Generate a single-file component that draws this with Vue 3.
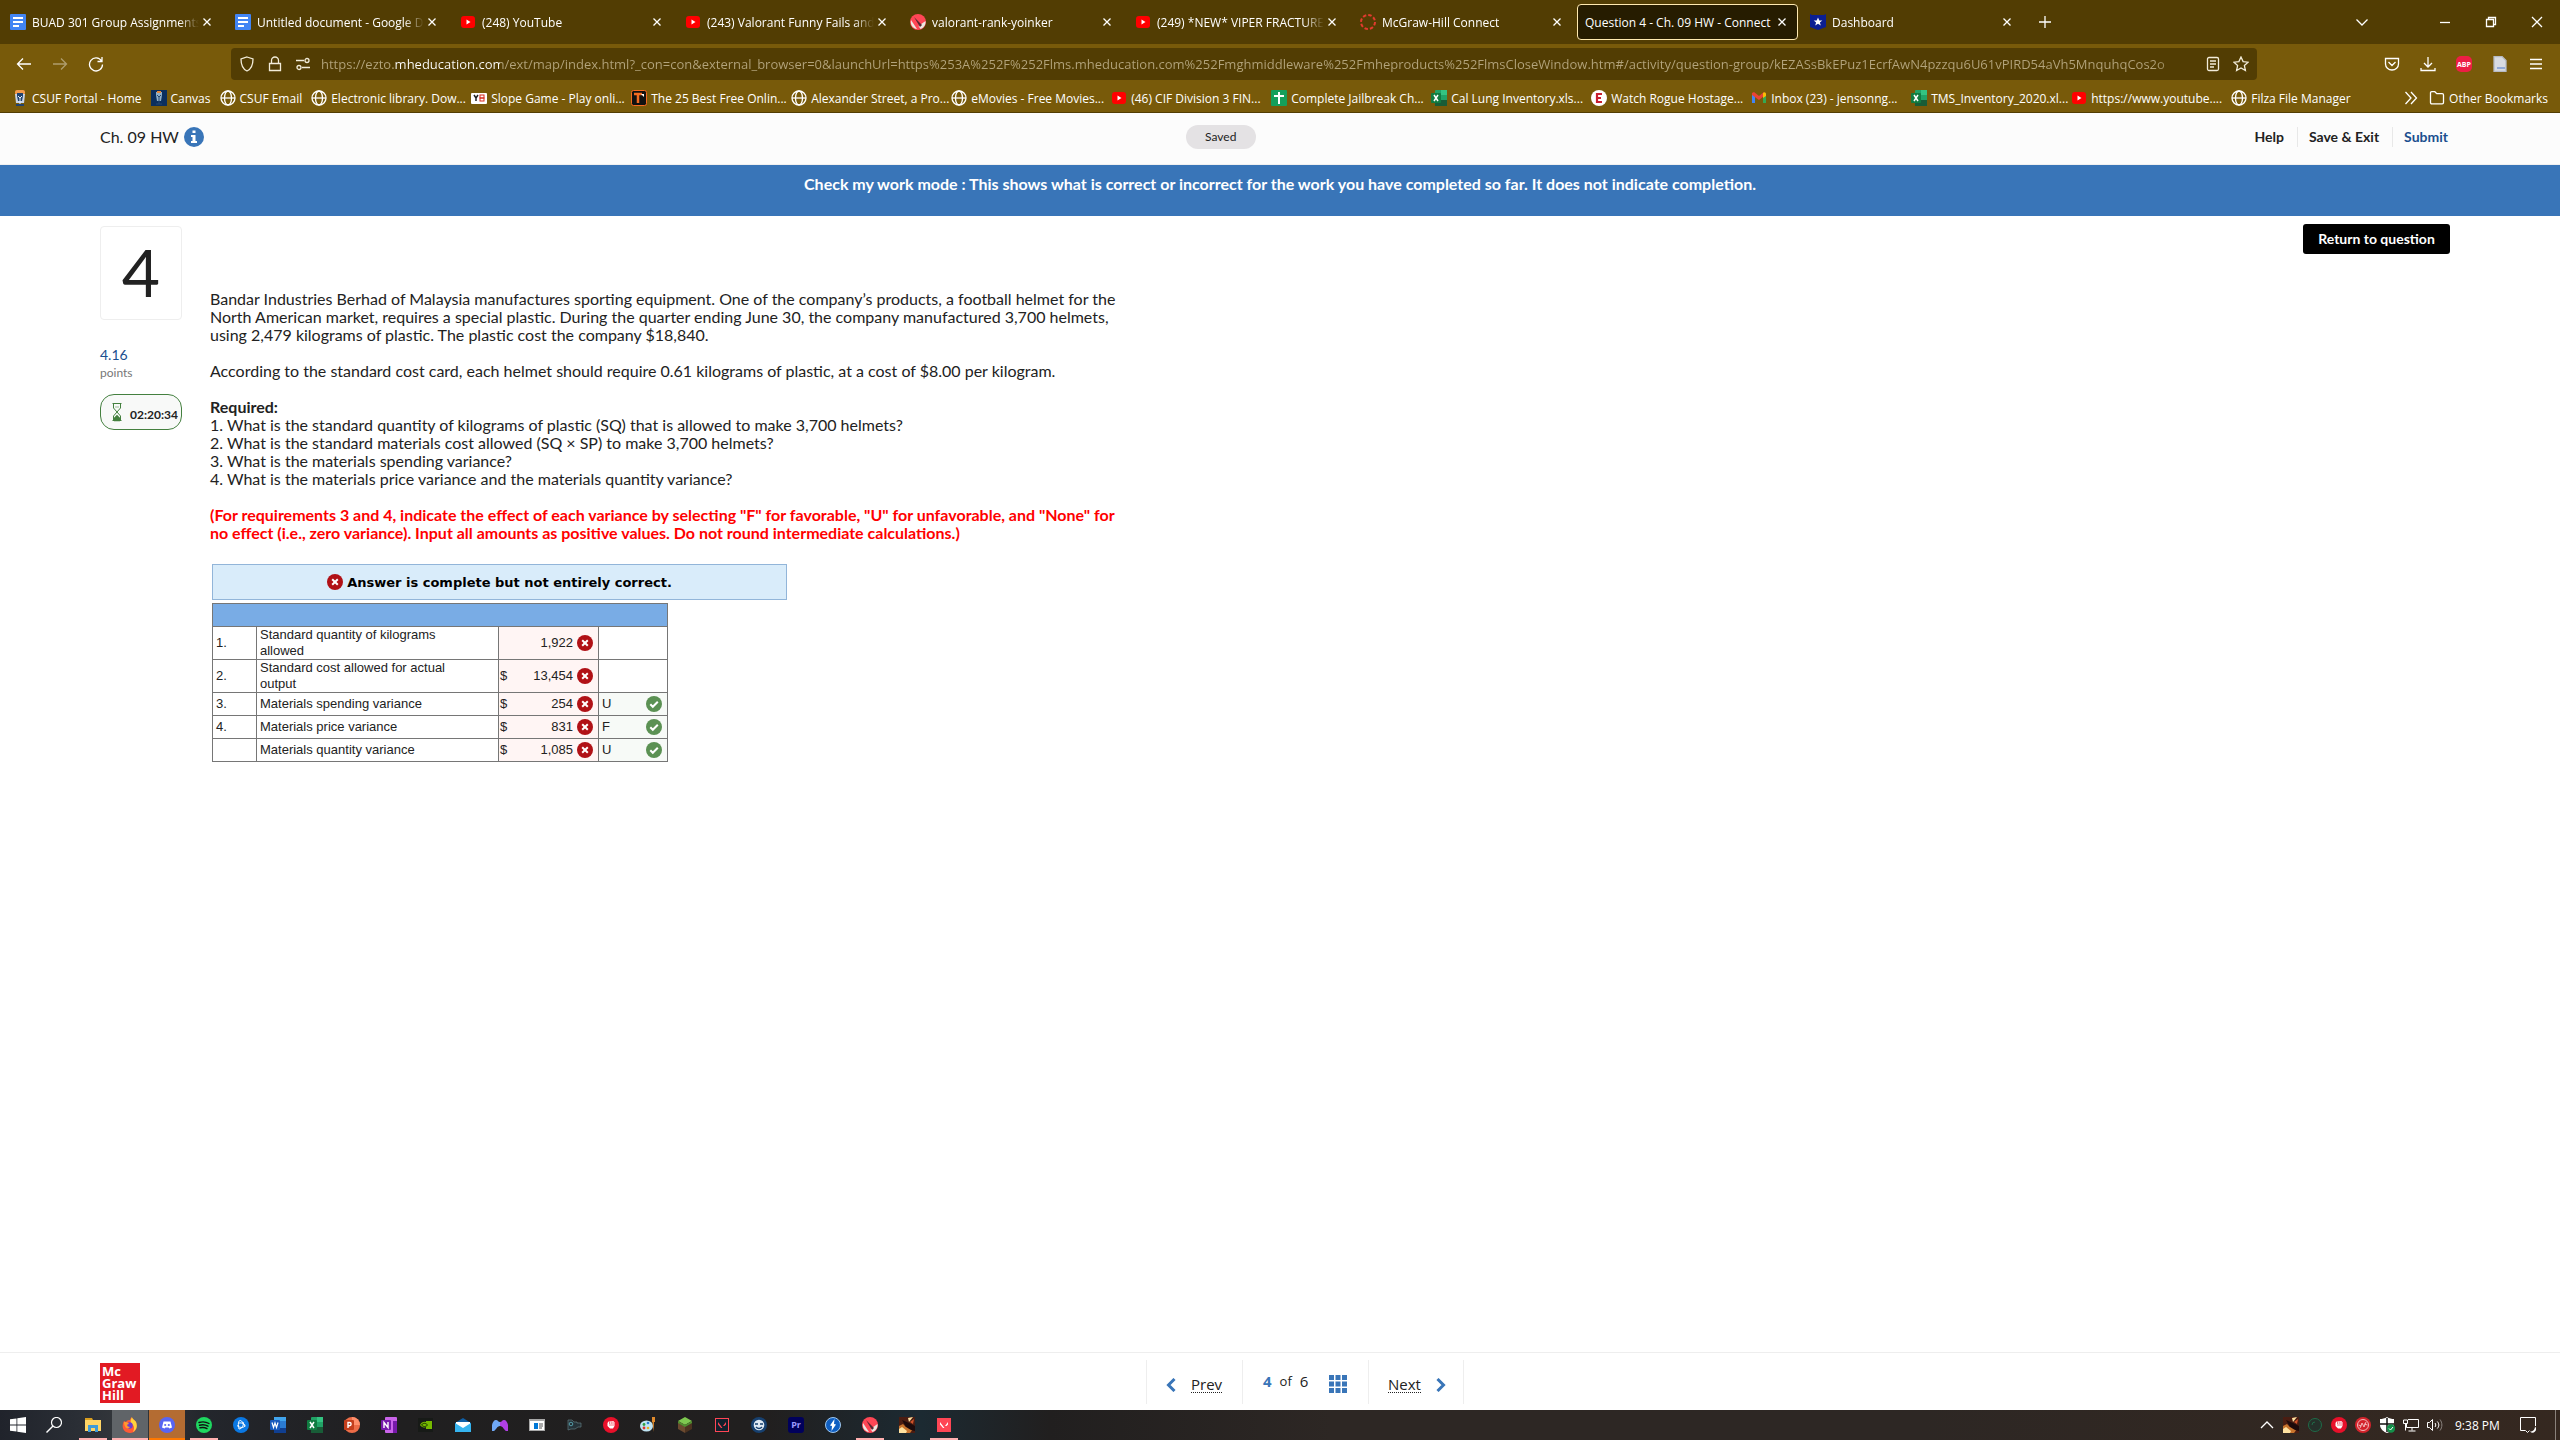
<script setup>
import {ref} from "vue";

const url = ref("https://ezto.mheducation.com/ext/map/index.html?_con=con&external_browser=0&launchUrl=https%253A%252F%252Flms.mheducation.com%252Fmghmiddleware%252Fmheproducts%252FlmsCloseWindow.htm#/activity/question-group/kEZASsBkEPuz1EcrfAwN4pzzqu6U61vPIRD54aVh5MnquhqCos2o")

const tabs = ref([
  {title: "BUAD 301 Group Assignments -", icon: "docs"},
  {title: "Untitled document - Google Do", icon: "docs"},
  {title: "(248) YouTube", icon: "youtube"},
  {title: "(243) Valorant Funny Fails and W", icon: "youtube"},
  {title: "valorant-rank-yoinker", icon: "yoinker"},
  {title: "(249) *NEW* VIPER FRACTURE M", icon: "youtube"},
  {title: "McGraw-Hill Connect", icon: "canvas-ring"},
  {title: "Question 4 - Ch. 09 HW - Connect", active: true},
  {title: "Dashboard", icon: "badge"},
])

const bookmarks = ref([
  {title: "CSUF Portal - Home", icon: "csuf"},
  {title: "Canvas", icon: "csuf-blue"},
  {title: "CSUF Email", icon: "globe"},
  {title: "Electronic library. Dow...", icon: "globe", cropped: true},
  {title: "Slope Game - Play onli...", icon: "y8", cropped: true},
  {title: "The 25 Best Free Onlin...", icon: "tnw", cropped: true},
  {title: "Alexander Street, a Pro...", icon: "globe", cropped: true},
  {title: "eMovies - Free Movies...", icon: "globe", cropped: true},
  {title: "(46) CIF Division 3 FIN...", icon: "youtube", cropped: true},
  {title: "Complete Jailbreak Ch...", icon: "sheets", cropped: true},
  {title: "Cal Lung Inventory.xls...", icon: "excel", cropped: true},
  {title: "Watch Rogue Hostage...", icon: "letter-e", cropped: true},
  {title: "Inbox (23) - jensonng...", icon: "gmail", cropped: true},
  {title: "TMS_Inventory_2020.xl...", icon: "excel", cropped: true},
  {title: "https://www.youtube....", icon: "youtube", cropped: true},
  {title: "Filza File Manager", icon: "globe"},
])

const answers = ref([
  {no: "1.", label: "Standard quantity of kilograms allowed", value: "1,922"},
  {no: "2.", label: "Standard cost allowed for actual output", sign: "$", value: "13,454"},
  {no: "3.", label: "Materials spending variance", sign: "$", value: "254", effect: "U"},
  {no: "4.", label: "Materials price variance", sign: "$", value: "831", effect: "F"},
  {no: "", label: "Materials quantity variance", sign: "$", value: "1,085", effect: "U"},
])

const apps = ref([
  {icon: "explorer", name: "File Explorer", state: "open"},
  {icon: "firefox", name: "Firefox", state: "current"},
  {icon: "discord", name: "Discord", state: "alert"},
  {icon: "spotify", name: "Spotify", state: "open"},
  {icon: "bnet", name: "Battle.net"},
  {icon: "word", name: "Word"},
  {icon: "excel", name: "Excel"},
  {icon: "ppt", name: "PowerPoint"},
  {icon: "onenote", name: "OneNote"},
  {icon: "nvidia", name: "NVIDIA"},
  {icon: "mail", name: "Mail"},
  {icon: "gamepad", name: "Controller"},
  {icon: "window", name: "App"},
  {icon: "engine", name: "Engine"},
  {icon: "fist", name: "Bloody"},
  {icon: "paint", name: "Paint"},
  {icon: "minecraft", name: "Minecraft"},
  {icon: "valorant-dark", name: "Valorant"},
  {icon: "mask", name: "Mask"},
  {icon: "premiere", name: "Premiere Pro"},
  {icon: "bolt", name: "Bolt"},
  {icon: "yoinker", name: "Yoinker", state: "open"},
  {icon: "flame", name: "Game"},
  {icon: "valorant", name: "Valorant client", state: "open"},
])

const tray = ref(["up", "flame", "ring", "fist", "swirl", "defender", "network", "volume"])
</script>

<template>
  <div class="screen">
    <!-- icon sprite -->
    <svg class="sprite" aria-hidden="true">
      <symbol id="docs" viewBox="0 0 16 16"><rect width="16" height="16" rx="1" fill="#4285f4"/><path d="M3 4h10M3 8h10M3 12h6" stroke="#fff" stroke-width="2"/></symbol>
      <symbol id="youtube" viewBox="0 0 16 16"><rect x="1" y="2" width="14" height="12" rx="3" fill="#f00"/><path d="M6.500 5.500v5L10.500 8z" fill="#fff"/></symbol>
      <symbol id="yoinker" viewBox="0 0 16 16"><circle cx="8" cy="8" r="8" fill="#ff4655"/><path d="M1 6l6 9C3 14.500 0 11 1 6zM15.500 7c.5 4-2 7-5 8l-2-3z" fill="#ece8e1"/><path d="M4 3l8 8-2 2z" fill="#5b2530"/></symbol>
      <symbol id="canvas-ring" viewBox="0 0 16 16"><circle cx="8" cy="8" r="7" fill="none" stroke="#e13b2f" stroke-width="2" stroke-dasharray="3.500 2"/></symbol>
      <symbol id="badge" viewBox="0 0 16 16"><path d="M0 0l2 1h12l2-1v13l-8 3-8-3z" fill="#0b1f93"/><path d="M8 3.500l1.300 3h3l-2.400 2 .9 3L8 9.700l-2.800 1.800.9-3-2.400-2h3z" fill="#fff"/></symbol>
      <symbol id="csuf" viewBox="0 0 16 16"><rect x="3" width="10" height="5" rx="2" fill="#f29b4c"/><path d="M3 4h10l-1 9h-8z" fill="#c9d4e6"/><path d="M5 3h6v3l-1 5H6L5 6zM4 14h8v2H4z" fill="#20426f"/><path d="M6 6l2 2 2-2M8 8v6" stroke="#e9eef6" fill="none"/></symbol>
      <symbol id="csuf-blue" viewBox="0 0 16 16"><rect width="16" height="16" fill="#0b2f5e"/><path d="M5 2h6v3l-1 6H6L5 5z" fill="#8fb0c9"/><path d="M6 5l2 2 2-2M8 7v7M5 14h6" stroke="#24466f" fill="none"/><rect x="6" y="1" width="4" height="2" fill="#e8893a"/></symbol>
      <symbol id="globe" viewBox="0 0 16 16"><g fill="none" stroke="#fff" stroke-width="1.300"><circle cx="8" cy="8" r="7"/><ellipse cx="8" cy="8" rx="3.500" ry="7"/><path d="M1 8h14"/></g></symbol>
      <symbol id="y8" viewBox="0 0 16 16"><rect y="3" width="16" height="11" rx="1" fill="#fff"/><path d="M3 5l2 3 2-3M5 8v3" stroke="#222" stroke-width="1.500" fill="none"/><rect x="9" y="5" width="4" height="3" fill="none" stroke="#d8291c"/><rect x="9" y="8" width="4" height="3" fill="none" stroke="#d8291c"/></symbol>
      <symbol id="tnw" viewBox="0 0 16 16"><rect x=".5" y=".5" width="15" height="15" rx="2" fill="#111" stroke="#f36b21"/><path d="M3 4h8M7 4v9" stroke="#f36b21" stroke-width="2.500"/><path d="M10 4h3v3" fill="#fff"/></symbol>
      <symbol id="sheets" viewBox="0 0 16 16"><rect width="16" height="16" rx="1" fill="#159f5b"/><path d="M3 6h10M8 2v12" stroke="#fff" stroke-width="2"/></symbol>
      <symbol id="excel" viewBox="0 0 16 16"><rect x="4" width="12" height="16" rx="1" fill="#21a366"/><rect x="10" width="6" height="5" fill="#33c481"/><rect x="4" y="10" width="12" height="6" fill="#185c37"/><rect y="3" width="10" height="10" rx="1" fill="#107c41"/><path d="M3 5l4 6M7 5l-4 6" stroke="#fff" stroke-width="1.500"/></symbol>
      <symbol id="letter-e" viewBox="0 0 16 16"><circle cx="8" cy="8" r="8" fill="#fff"/><path d="M11 4H6v8h5M6 8h4" stroke="#c8202f" stroke-width="2.200" fill="none"/></symbol>
      <symbol id="gmail" viewBox="0 0 16 16"><path d="M1 4h3v9H1z" fill="#4285f4"/><path d="M12 4h3v9h-3z" fill="#34a853"/><path d="M1 3l2-1 5 4 5-4v4l-5 4-7-5z" fill="#ea4335"/><path d="M12 3c2-2 3 0 3 1v2l-3 2z" fill="#fbbc04"/></symbol>
      <symbol id="folder" viewBox="0 0 16 16"><path d="M1.500 3c0-.8.500-1.300 1.300-1.300h3l2 2h5.400c.8 0 1.300.5 1.300 1.300v7.500c0 .8-.5 1.300-1.300 1.300H2.800c-.8 0-1.300-.5-1.300-1.300z" fill="none" stroke="#fff" stroke-width="1.300"/></symbol>
      <symbol id="cross" viewBox="0 0 16 16"><circle cx="8" cy="8" r="8" fill="#b11116"/><path d="M5.200 5.200l5.600 5.600M10.800 5.200l-5.600 5.600" stroke="#fff" stroke-width="2"/></symbol>
      <symbol id="tick" viewBox="0 0 16 16"><circle cx="8" cy="8" r="8" fill="#5b9153"/><path d="M4.300 8.300l2.500 2.500 5-5" fill="none" stroke="#fff" stroke-width="2"/></symbol>
      <symbol id="explorer" viewBox="0 0 16 16"><path d="M0 1h7l1 2v3H0z" fill="#d99e1f"/><rect y="3" width="16" height="11" fill="#ffd566"/><path d="M3 15V8h10v7h-3v-4H6v4z" fill="#3f9bd8"/></symbol>
      <symbol id="firefox" viewBox="0 0 16 16"><path d="M2 4l2 1c1-2 3-2 4-2 0-1 1-2 2-3 0 2 3 3 4 5s2 11-6 11C1 16-1 9 2 4z" fill="#ff5a36"/><path d="M10 0c0 2 3 3 4 5 2 5 0 8-3 10 2-4 1-7-2-9-1-2 0-4 1-6z" fill="#ffd43c"/><circle cx="7.500" cy="8.500" r="3.200" fill="#6a3fd1"/><path d="M2 5c2 0 4 0 5 2-3 0-2 3 1 3-2 3-6 1-6-5z" fill="#ff9a2e"/></symbol>
      <symbol id="discord" viewBox="0 0 16 16"><circle cx="8" cy="8" r="8" fill="#5865f2"/><path d="M4.500 4.500h7l1.500 6-2.500 1-1-1h-3l-1 1-2.500-1z" fill="#fff"/><circle cx="6.200" cy="8" r="1.100" fill="#5865f2"/><circle cx="9.800" cy="8" r="1.100" fill="#5865f2"/></symbol>
      <symbol id="spotify" viewBox="0 0 16 16"><circle cx="8" cy="8" r="8" fill="#1ed760"/><path d="M3 5.500c3.500-1 7-.7 10 1M3.500 8.200c3-.8 6-.5 8.500 1M4 10.800c2.500-.6 5-.4 7 .8" fill="none" stroke="#111" stroke-width="1.400" stroke-linecap="round"/></symbol>
      <symbol id="bnet" viewBox="0 0 16 16"><circle cx="8" cy="8" r="8" fill="#0a78e3"/><g fill="none" stroke="#fff"><path d="M6 12C5 8 5 4 7 3.500S11 8 12 10"/><path d="M4 8.500c3 3 8 2 8 0S7 5 5 6.500M6 12c3 0 5-4 4-7"/></g></symbol>
      <symbol id="word" viewBox="0 0 16 16"><rect x="4" width="12" height="16" rx="1" fill="#2b7cd3"/><rect x="4" width="12" height="4" fill="#41a5ee"/><rect x="4" y="11" width="12" height="5" fill="#103f91"/><rect y="3" width="10" height="10" rx="1" fill="#185abd"/><path d="M2 5.500l1.500 5L5 6l1.500 4.500 1.500-5" fill="none" stroke="#fff" stroke-width="1.200"/></symbol>
      <symbol id="ppt" viewBox="0 0 16 16"><circle cx="8" cy="8" r="8" fill="#ed6c47"/><path d="M8 0a8 8 0 0 1 8 8H8z" fill="#ff8f6b"/><rect y="3" width="10" height="10" rx="1" fill="#c43e1c"/><path d="M4 11V5.500h1.500a1.600 1.600 0 0 1 0 3.200H4" fill="none" stroke="#fff" stroke-width="1.400"/></symbol>
      <symbol id="onenote" viewBox="0 0 16 16"><rect x="4" width="12" height="16" rx="1" fill="#ca64ea"/><rect x="12" y="4" width="4" height="12" fill="#7719aa"/><rect y="3" width="10" height="10" rx="1" fill="#7719aa"/><path d="M3 11V5.500L7 10.500V5" fill="none" stroke="#fff" stroke-width="1.400"/></symbol>
      <symbol id="nvidia" viewBox="0 0 16 16"><rect y="1" width="15" height="14" fill="#171a17"/><path d="M2 8c2-4 6-4 9-1-3 5-7 4-9 1zM8 4h6v8H8z" fill="#76b900"/><path d="M3.500 8c2-2.500 4-2 6 0-2 2-4 2-6 0z" fill="none" stroke="#1c3300"/></symbol>
      <symbol id="mail" viewBox="0 0 16 16"><path d="M0 6l8-5 8 5v4H0z" fill="#0f5fa6"/><path d="M1 5h14v6H1z" fill="#fff"/><path d="M0 6l8 5 8-5v9H0z" fill="#36b4ef"/></symbol>
      <symbol id="gamepad" viewBox="0 0 16 16"><path d="M0 14c-1-6 1-11 4-11 2 0 2 2 4 2v4c-3 0-4 4-6 5z" fill="#6fa8f5"/><path d="M16 14c1-6-1-11-4-11-2 0-2 2-4 2v4c3 0 4 4 6 5z" fill="#b13fe6"/></symbol>
      <symbol id="window" viewBox="0 0 16 16"><rect y="2" width="16" height="12" fill="#a8a8a8"/><rect x="1" y="4" width="14" height="9" fill="#fff"/><rect x="5" y="6" width="4" height="6" fill="#0078d7"/><path d="M10 7h4M10 9h4M10 11h3" stroke="#555"/></symbol>
      <symbol id="engine" viewBox="0 0 16 16"><path d="M2 3h4l2 2h3v1h4v4h-3l-3 2H5l-3 1z" fill="#263238" stroke="#5f7a80" stroke-width=".7"/><circle cx="5" cy="7" r="1.800" fill="none" stroke="#5fb4c0" stroke-width=".8"/></symbol>
      <symbol id="fist" viewBox="0 0 16 16"><circle cx="8" cy="8" r="8" fill="#e8102a"/><path d="M4.500 6l1-1.500 5-.5 1 1.500V9l-1.500 2.500H7L4.500 9z" fill="#fff"/><path d="M6.500 4.500v2.500M8.200 4.500v2.500M10 4.500v2.500M6 8h5" stroke="#e8102a" stroke-width=".6"/></symbol>
      <symbol id="paint" viewBox="0 0 16 16"><ellipse cx="6.500" cy="9" rx="6.500" ry="5.500" fill="#bfe4f3"/><circle cx="4" cy="7.500" r="1.400" fill="#2f9e44"/><circle cx="8" cy="6" r="1.300" fill="#2b7cd3"/><circle cx="4" cy="11" r="1.400" fill="#e03131"/><circle cx="8" cy="11" r="1.300" fill="#e8b022"/><path d="M12 0h3v5h-1l-.5 10-1-10H12z" fill="#e08a2c"/></symbol>
      <symbol id="minecraft" viewBox="0 0 16 16"><path d="M1 4l7-4 7 4-7 4z" fill="#7ec850"/><path d="M1 4l7 4v8l-7-4z" fill="#6b4a2f"/><path d="M15 4L8 8v8l7-4z" fill="#4c3320"/><path d="M1 4l7 4 7-4v2l-7 4-7-4z" fill="#4f8f30"/></symbol>
      <symbol id="valorant-dark" viewBox="0 0 16 16"><rect x="1.500" y="1.500" width="13" height="13" fill="#10202c" stroke="#ff4655"/><path d="M4 5l4.500 6H7L4 7.500zM12 5v2.500L10.500 9H9z" fill="#ff4655"/></symbol>
      <symbol id="mask" viewBox="0 0 16 16"><circle cx="8" cy="8" r="8" fill="#17406f"/><circle cx="8" cy="8" r="5.300" fill="#dfe9f3"/><path d="M4 7h3M9 7h3M5 10c2 2 4 2 6 0" stroke="#17406f" stroke-width="1.400" fill="none"/></symbol>
      <symbol id="premiere" viewBox="0 0 16 16"><rect width="16" height="16" rx="3" fill="#00005b"/><text x="8" y="11" font-family="Open Sans, sans-serif" font-size="9" font-weight="700" text-anchor="middle" fill="#9b9bff">Pr</text></symbol>
      <symbol id="bolt" viewBox="0 0 16 16"><circle cx="8" cy="8" r="7.500" fill="#0f5fc2" stroke="#9ec7ee"/><path d="M9.500 2L5 8.500l2 .5-.5 5L11 7.500 9 7z" fill="#fff"/></symbol>
      <symbol id="flame" viewBox="0 0 16 16"><rect width="16" height="16" fill="#4a1d12"/><path d="M0 16V9l4-2 3 3 3-1 4 3-3 4z" fill="#c8742d"/><path d="M0 16v-4l3-2 5 4-1 2zM9 1l5-1-4 5z" fill="#ffe2a0"/><path d="M3 3l7 3 6 3v5l-4-1-5-3z" fill="#1c0a0b"/><path d="M11 5l4-3-1 5z" fill="#d0532a"/></symbol>
      <symbol id="valorant" viewBox="0 0 16 16"><rect x="1" y="1" width="14" height="14" fill="#ff4655"/><path d="M4 5l4.500 6H7L4 7.500zM12 5v2.500L10.500 9H9z" fill="#fff"/></symbol>
      <symbol id="up" viewBox="0 0 16 16"><path d="M2 11l6-6 6 6" fill="none" stroke="#fff" stroke-width="1.300"/></symbol>
      <symbol id="ring" viewBox="0 0 16 16"><circle cx="8" cy="8" r="6.500" fill="#24302a" stroke="#1f6b48"/><path d="M5 8a3 3 0 0 1 3-3" stroke="#1f6b48" fill="none"/></symbol>
      <symbol id="swirl" viewBox="0 0 16 16"><circle cx="8" cy="8" r="8" fill="#d3232b"/><g fill="none" stroke="#f3b9bb"><circle cx="8" cy="8" r="5.500"/><path d="M5 11l2-5 2 4 2-5M3.500 8l3 1M9 7l3.500 1"/></g></symbol>
      <symbol id="defender" viewBox="0 0 16 16"><path d="M8 0c2 1.500 5 2 7 2v6c0 4-4 7-7 8-3-1-7-4-7-8V2c2 0 5-.5 7-2z" fill="#fff"/><path d="M8 1v14M1 7h14" stroke="#111" stroke-width="1.500"/><circle cx="12" cy="11.500" r="4.200" fill="#14904a"/><path d="M10 11.500l1.500 1.500 2.500-3" stroke="#fff" fill="none"/></symbol>
      <symbol id="network" viewBox="0 0 16 16"><path d="M5 2.500h10.500v8H3.500V7M9 10.500v3M5.500 14h7M.5 3h4v3.500h-4zM2.500 6.500v7" fill="none" stroke="#fff"/></symbol>
      <symbol id="volume" viewBox="0 0 16 16"><path d="M.5 5.500h2l3-3v11l-3-3h-2z" fill="none" stroke="#fff"/><path d="M8 6c1 1.300 1 2.700 0 4M10.300 4.500c2 2.300 2 4.700 0 7" fill="none" stroke="#fff"/><path d="M13 2.500c2.500 3.300 2.500 7.700 0 11" fill="none" stroke="#8c8580"/></symbol>
    </svg>

    <!-- browser chrome -->
    <header class="browser">
      <div class="tab-strip">
        <div v-for="tab in tabs" class="tab" :class="{active: tab.active}">
          <svg v-if="tab.icon" class="icon"><use :href="'#' + tab.icon"/></svg>
          <button class="tab-title">{{tab.title}}</button>
          <button class="tab-close" aria-label="Close tab">
            <svg viewBox="0 0 16 16"><path d="M4.500 4.500l7 7M11.500 4.500l-7 7"/></svg>
          </button>
        </div>
        <button class="new-tab" aria-label="New tab">
          <svg viewBox="0 0 16 16"><path d="M8 2v12M2 8h12"/></svg>
        </button>
        <div class="window-buttons">
          <button class="all-tabs" aria-label="List all tabs"><svg viewBox="0 0 16 16"><path d="M2.500 5.500L8 11l5.500-5.500"/></svg></button>
          <button aria-label="Minimize"><svg viewBox="0 0 16 16"><path d="M3 8.500h10"/></svg></button>
          <button aria-label="Restore"><svg viewBox="0 0 16 16"><path d="M3.500 5.500h7v7h-7zM5.500 5.500v-2h7v7h-2"/></svg></button>
          <button aria-label="Close"><svg viewBox="0 0 16 16"><path d="M3 3l10 10M13 3L3 13"/></svg></button>
        </div>
      </div>

      <div class="nav-bar">
        <div class="nav-buttons">
          <button aria-label="Back"><svg viewBox="0 0 16 16"><path d="M15 8H1.500M7 2.500L1.500 8 7 13.500"/></svg></button>
          <button class="dim" aria-label="Forward"><svg viewBox="0 0 16 16"><path d="M1 8h13.500M9 2.500L14.500 8 9 13.500"/></svg></button>
          <button aria-label="Reload"><svg viewBox="0 0 16 16"><path d="M13.500 5A6.500 6.500 0 1 0 14.500 8.500M14 1v4.500H9.500"/></svg></button>
        </div>
        <div class="url-bar">
          <svg viewBox="0 0 16 16"><path d="M8 1l6 2c0 6-1.500 10-6 12C3.500 13 2 9 2 3z"/></svg>
          <svg viewBox="0 0 16 16"><path d="M2.500 7.500h11v7h-11zM4.500 7.500V4.500a3.500 3.500 0 0 1 7 0v3"/></svg>
          <svg viewBox="0 0 16 16"><path d="M1 4.500h8M7 11.500h8"/><circle cx="12" cy="4.500" r="2"/><circle cx="4" cy="11.500" r="2"/></svg>
          <input v-model="url" class="url-input" type="text" aria-label="Address" spellcheck="false">
          <svg viewBox="0 0 16 16"><rect x="2.500" y="1.500" width="11" height="13" rx="1.500"/><path d="M5 5h6M5 8h6M5 11h4"/></svg>
          <svg viewBox="0 0 16 16"><path d="M8 1l2.100 4.600 5 .6-3.700 3.400 1 4.900L8 12l-4.400 2.500 1-4.900L.9 6.200l5-.6z"/></svg>
        </div>
        <div class="toolbar">
          <button aria-label="Pocket"><svg viewBox="0 0 16 16"><path d="M1.500 2.500h13V8a6.500 6 0 0 1-13 0zM4.500 6L8 9.500 11.500 6"/></svg></button>
          <button aria-label="Downloads"><svg viewBox="0 0 16 16"><path d="M8 1v9.500M4 7l4 4 4-4M1 12v2.500h14V12"/></svg></button>
          <button class="abp" aria-label="Adblock Plus">ABP</button>
          <button aria-label="Reader"><svg viewBox="0 0 16 16"><path d="M2 .5h8l4 4v11H2z" fill="#d8dbe2" stroke="#b6bac4"/><path d="M5 12h8" stroke="#6d8fd0"/></svg></button>
          <button aria-label="Menu"><svg viewBox="0 0 16 16"><path d="M2 3.500h12M2 8h12M2 12.500h12"/></svg></button>
        </div>
      </div>

      <nav class="bookmarks">
        <a v-for="mark in bookmarks" href="#" class="bookmark">
          <svg class="icon"><use :href="'#' + mark.icon"/></svg>
          <span :class="{cropped: mark.cropped}">{{mark.title}}</span>
        </a>
        <div class="bookmarks-more">
          <button aria-label="More bookmarks"><svg viewBox="0 0 16 16"><path d="M2.500 2l5.500 6-5.500 6M8 2l5.500 6L8 14"/></svg></button>
          <a href="#" class="bookmark">
            <svg class="icon"><use href="#folder"/></svg>
            <span>Other Bookmarks</span>
          </a>
        </div>
      </nav>
    </header>

    <!-- assignment header -->
    <div class="assignment-bar">
      <div class="assignment-title">
        <span>Ch. 09 HW</span>
        <svg viewBox="0 0 20 20"><circle cx="10" cy="10" r="10" fill="#3975b8"/><path d="M8.500 3.500h3v2.500h-3zM7 8h4.500v6H13v2H7v-2h1.500v-4H7z" fill="#fff"/></svg>
      </div>
      <span class="saved">Saved</span>
      <div class="assignment-actions">
        <a href="#">Help</a>
        <a href="#">Save &amp; Exit</a>
        <a href="#" class="submit">Submit</a>
      </div>
    </div>
    <div class="banner">Check my work mode : This shows what is correct or incorrect for the work you have completed so far. It does not indicate completion.</div>

    <main class="main">
      <aside class="side">
        <div class="number">4</div>
        <div class="score">4.16</div>
        <div class="points">points</div>
        <div class="timer">
          <svg viewBox="0 0 10 20"><path d="M.5 1.500h9M.5 18.500h9M1.500 2v4L5 10l3.500-4V2M1.500 18v-4L5 10l3.500 4v4" fill="none" stroke="#44803f"/><path d="M5 13l3 3v3H2v-3zM3 5h4" fill="#44803f" stroke="#44803f" stroke-width=".5"/></svg>
          <span>02:20:34</span>
        </div>
      </aside>

      <section class="question">
        <p>
          Bandar Industries Berhad of Malaysia manufactures sporting equipment. One of the company’s products, a football helmet for the<br>
          North American market, requires a special plastic. During the quarter ending June 30, the company manufactured 3,700 helmets,<br>
          using 2,479 kilograms of plastic. The plastic cost the company $18,840.
        </p>
        <p>According to the standard cost card, each helmet should require 0.61 kilograms of plastic, at a cost of $8.00 per kilogram.</p>
        <p>
          <b>Required:</b><br>
          1. What is the standard quantity of kilograms of plastic (SQ) that is allowed to make 3,700 helmets?<br>
          2. What is the standard materials cost allowed (SQ × SP) to make 3,700 helmets?<br>
          3. What is the materials spending variance?<br>
          4. What is the materials price variance and the materials quantity variance?
        </p>
        <p class="note">
          (For requirements 3 and 4, indicate the effect of each variance by selecting "F" for favorable, "U" for unfavorable, and "None" for<br>
          no effect (i.e., zero variance). Input all amounts as positive values. Do not round intermediate calculations.)
        </p>

        <div class="result">
          <svg class="icon"><use href="#cross"/></svg>
          <span>Answer is complete but not entirely correct.</span>
        </div>

        <table class="answers">
          <colgroup>
            <col class="col-no"><col class="col-label"><col class="col-value"><col class="col-effect">
          </colgroup>
          <thead>
            <tr><th colspan="4"></th></tr>
          </thead>
          <tbody>
            <tr v-for="row in answers">
              <td>{{row.no}}</td>
              <td>{{row.label}}</td>
              <td class="value">
                <div class="amount">
                  <span v-if="row.sign" class="sign">{{row.sign}}</span>
                  <span class="figure">{{row.value}}<svg class="icon"><use href="#cross"/></svg></span>
                </div>
              </td>
              <td :class="{effect: row.effect}">
                <div v-if="row.effect" class="pick">{{row.effect}}<svg class="icon"><use href="#tick"/></svg></div>
              </td>
            </tr>
          </tbody>
        </table>
      </section>

      <button class="return">Return to question</button>
    </main>

    <footer class="pager">
      <div class="logo"><span>Mc</span><span>Graw</span><span>Hill</span></div>
      <nav class="pages">
        <a href="#" class="page-cell prev">
          <svg viewBox="0 0 10 14"><path d="M8.500 1l-6 6 6 6"/></svg>
          <span>Prev</span>
        </a>
        <div class="page-cell count">
          <b>4</b><span class="of">of</span><span>6</span>
          <button aria-label="All questions">
            <svg viewBox="0 0 18 18"><path d="M0 0h5v5H0zM6.500 0h5v5h-5zM13 0h5v5h-5zM0 6.500h5v5H0zM6.500 6.500h5v5h-5zM13 6.500h5v5h-5zM0 13h5v5H0zM6.500 13h5v5h-5zM13 13h5v5h-5z"/></svg>
          </button>
        </div>
        <a href="#" class="page-cell next">
          <span>Next</span>
          <svg viewBox="0 0 10 14"><path d="M1.500 1l6 6-6 6"/></svg>
        </a>
      </nav>
    </footer>

    <!-- windows taskbar -->
    <div class="taskbar">
      <button class="start" aria-label="Start"><svg viewBox="0 0 16 16"><path d="M0 2.300L6.500 1.400v6.100H0zM7.300 1.300L16 0v7.500H7.300zM0 8.400h6.500v6.200L0 13.700zM7.300 8.400H16V16l-8.700-1.300z" fill="#fff"/></svg></button>
      <button class="start" aria-label="Search"><svg viewBox="0 0 16 16"><circle cx="10.500" cy="5.500" r="5" fill="none" stroke="#fff" stroke-width="1.200"/><path d="M7 9L.5 15.500" stroke="#fff" stroke-width="1.400"/></svg></button>
      <div class="apps">
        <button v-for="app in apps" class="app" :class="app.state" :aria-label="app.name">
          <svg class="icon"><use :href="'#' + app.icon"/></svg>
        </button>
      </div>
      <div class="tray">
        <svg v-for="name in tray" class="icon"><use :href="'#' + name"/></svg>
      </div>
      <time class="clock">9:38 PM</time>
      <button class="notices" aria-label="Notifications"><svg viewBox="0 0 16 16"><path d="M9.500 13.500l-2 2-2-2h-5V.5h15V9" fill="none" stroke="#fff"/><path d="M15 9.500a3.500 3.500 0 1 1-5 5c3 0 5-2 5-5z" fill="#fff"/></svg></button>
    </div>
  </div>
</template>

<style>
body {
  background: #fff;
}
</style>

<style scoped>
.screen {
  display: flex;
  flex-direction: column;
  min-height: 100vh;
  font-family: Lato, "Open Sans", sans-serif;
  color: #222;
}

.sprite {
  position: absolute;
  width: 0;
  height: 0;
}

button {
  padding: 0;
  border: 0;
  background: none;
  color: inherit;
  font: inherit;
}

a {
  color: inherit;
  text-decoration: none;
}

svg {
  flex: none;
  display: block;
}

.icon {
  width: 16px;
  height: 16px;
}

/* browser */
.browser {
  background: #785a0a;
  color: #fff;
  font-family: "Open Sans", "Noto Sans", sans-serif;
  font-size: 12px;
  border-bottom: 1px solid #523d03;
}

.browser button svg,
.url-bar svg {
  width: 16px;
  height: 16px;
  fill: none;
  stroke: #fff;
  stroke-width: 1.3;
}

.tab-strip {
  display: flex;
  align-items: center;
  gap: 4px;
  height: 44px;
  padding-left: 2px;
  background: #523d03;
}

.tab {
  box-sizing: border-box;
  display: flex;
  align-items: center;
  width: 221px;
  height: 36px;
  padding: 0 8px;
}

.tab .icon {
  margin-right: 6px;
}

.tab-title {
  flex: 1;
  overflow: hidden;
  white-space: nowrap;
  text-align: left;
  mask-image: linear-gradient(to left, transparent, #000 20px);
}

.tab.active {
  padding: 0 7px;
  border: 1px solid #ffe9b0;
  border-radius: 4px;
  background: #261c00;
}

.tab.active .tab-title {
  mask-image: none;
}

.tab-close svg,
.window-buttons svg {
  stroke-width: 1;
}

.new-tab {
  padding: 0 8px;
  margin-left: 2px;
}

.window-buttons {
  display: flex;
  margin-left: auto;
}

.window-buttons button {
  display: flex;
  justify-content: center;
  width: 46px;
}

.window-buttons .all-tabs {
  margin-right: 37px;
}

.nav-bar {
  display: flex;
  align-items: center;
  height: 40px;
}

.nav-buttons {
  display: flex;
  gap: 20px;
  width: 215px;
  padding-left: 16px;
}

.nav-buttons .dim {
  opacity: 0.4;
}

.url-bar {
  flex: 1;
  display: flex;
  align-items: center;
  gap: 12px;
  box-sizing: border-box;
  height: 32px;
  padding: 0 8px;
  border-radius: 4px;
  background: #523d03;
}

.url-bar svg {
  stroke: #f2ecd9;
}

/* the domain is picked out in white, the rest of the address is dimmed */
.url-input {
  flex: 1;
  min-width: 0;
  padding: 0;
  margin-left: -2px;
  border: 0;
  outline: 0;
  font: inherit;
  font-size: 13px;
  color: transparent;
  background: linear-gradient(to right, #b3a47c 74px, #fff 74px, #fff 179px, #b3a47c 179px, #b3a47c calc(100% - 40px), transparent);
  background-clip: text;
}

.toolbar {
  display: flex;
  align-items: center;
  justify-content: flex-end;
  gap: 20px;
  width: 287px;
  padding-right: 16px;
}

.abp {
  width: 16px;
  height: 16px;
  border-radius: 5px;
  background: #ed1e45;
  font-size: 7px;
  font-weight: 700;
}

.bookmarks {
  display: flex;
  align-items: center;
  gap: 9px;
  height: 28px;
  padding: 0 12px;
}

.bookmark {
  display: flex;
  align-items: center;
  gap: 4px;
  white-space: nowrap;
}

.cropped {
  width: 131px;
}

.bookmarks-more {
  display: flex;
  gap: 10px;
  margin-left: auto;
}

/* assignment header */
.assignment-bar {
  display: grid;
  grid-template-columns: 10fr auto 11fr;
  align-items: center;
  box-sizing: border-box;
  height: 52px;
  padding: 0 110px 4px 100px;
  border-bottom: 1px solid #f0f0f0;
  background: #fcfcfc;
}

.assignment-title {
  display: flex;
  align-items: center;
  gap: 5px;
  font-size: 16px;
}

.assignment-title svg {
  width: 20px;
  height: 20px;
}

.saved {
  width: 70px;
  border-radius: 12px;
  background: #e4e2e4;
  font-size: 12px;
  line-height: 24px;
  text-align: center;
}

.assignment-actions {
  display: flex;
  justify-content: flex-end;
  padding-right: 2px;
  font-size: 14px;
  font-weight: 700;
  line-height: 20px;
}

.assignment-actions a + a {
  margin-left: 13px;
  padding-left: 11px;
  border-left: 1px solid #e8e8e8;
}

.assignment-actions .submit {
  color: #1b4f8f;
}

.banner {
  box-sizing: border-box;
  min-height: 51px;
  padding-top: 9px;
  background: #3975b8;
  color: #fff;
  font-size: 16px;
  font-weight: 700;
  line-height: 20px;
  text-align: center;
}

/* question */
.main {
  flex: 1;
  display: flex;
  align-items: flex-start;
  padding: 8px 110px 0 100px;
}

.side {
  width: 82px;
  margin-top: 2px;
  margin-right: 28px;
}

.number {
  box-sizing: border-box;
  height: 94px;
  margin-bottom: 26px;
  border: 1px solid #eee;
  border-radius: 4px;
  font-size: 66px;
  line-height: 90px;
  text-align: center;
}

.score {
  color: #1b4f8f;
  font-size: 14px;
  line-height: 18px;
}

.points {
  color: #777;
  font-size: 12px;
  line-height: 18px;
}

.timer {
  display: flex;
  align-items: center;
  gap: 8px;
  box-sizing: border-box;
  height: 36px;
  margin-top: 12px;
  padding-left: 11px;
  border: 1px solid #44803f;
  border-radius: 14px;
  background: #f8f9f8;
  font-size: 12px;
  font-weight: 700;
}

.timer svg {
  width: 10px;
  height: 20px;
}

.timer span {
  padding-top: 4px;
}

.question {
  flex: 1;
  padding-top: 66px;
  font-size: 16px;
  line-height: 18px;
}

.question p {
  margin: 0 0 18px;
  white-space: nowrap;
}

.question .note {
  margin-bottom: 22px;
  color: #f00;
  font-weight: 700;
}

.result {
  display: flex;
  align-items: center;
  justify-content: center;
  gap: 4px;
  box-sizing: border-box;
  width: 575px;
  height: 36px;
  margin: 0 0 3px 2px;
  border: 1px solid #92b5d9;
  background: #d9ecfa;
  color: #000;
  font: bold 13px "DejaVu Sans", sans-serif;
}

.answers {
  table-layout: fixed;
  width: 455px;
  margin-left: 2px;
  border-collapse: collapse;
  font: 13px/16px "Liberation Sans", Arial, sans-serif;
}

.col-no {
  width: 44px;
}

.col-label {
  width: 242px;
}

.col-value {
  width: 100px;
}

.col-effect {
  width: 69px;
}

.answers th {
  height: 22px;
  padding: 0;
  border: 1px solid #767676;
  background: #79ace5;
}

.answers td {
  height: 22px;
  padding: 0 3px;
  border: 1px solid #767676;
}

.answers td:nth-child(2) {
  padding-right: 32px;
}

.answers .value {
  height: 1px;
  padding: 0;
  background: #fff5f4;
}

.amount {
  display: flex;
  height: 100%;
}

.amount .sign {
  display: flex;
  align-items: center;
  padding: 0 1px;
}

.figure {
  flex: 1;
  display: flex;
  align-items: center;
  justify-content: flex-end;
  gap: 4px;
  padding-right: 5px;
}

.answers .effect {
  padding-right: 5px;
  background: #f7faf7;
}

.pick {
  display: flex;
  align-items: center;
  justify-content: space-between;
}

.return {
  width: 147px;
  height: 30px;
  padding-bottom: 2px;
  border-radius: 3px;
  background: #000;
  color: #fff;
  font-size: 14px;
  font-weight: 700;
}

/* footer */
.pager {
  display: flex;
  align-items: center;
  height: 57px;
  padding: 0 100px;
  border-top: 1px solid #eee;
}

.logo {
  display: flex;
  flex-direction: column;
  box-sizing: border-box;
  width: 40px;
  height: 40px;
  padding: 2px;
  margin-top: 2px;
  background: #e21a23;
  color: #fff;
  font: bold 13px/12px "Open Sans", sans-serif;
}

.pages {
  flex: 1;
  display: flex;
  justify-content: center;
  margin-right: -10px;
}

.page-cell {
  display: flex;
  align-items: center;
  box-sizing: border-box;
  height: 44px;
  border-left: 1px solid #eee;
  font-family: "Open Sans", sans-serif;
  font-size: 15px;
}

.page-cell svg {
  width: 10px;
  height: 14px;
  fill: none;
  stroke: #3975b8;
  stroke-width: 3;
}

.prev,
.next {
  gap: 15px;
  width: 96px;
  padding: 6px 0 0 19px;
}

.next {
  border-right: 1px solid #eee;
}

.prev span,
.next span {
  border-bottom: 1px dotted #222;
  line-height: 16px;
}

.count {
  gap: 8px;
  width: 126px;
  padding: 0 0 2px 20px;
}

.count b {
  color: #3975b8;
}

.count .of {
  font-size: 13px;
}

.count button {
  margin: 6px 0 0 13px;
}

.count svg {
  width: 18px;
  height: 18px;
  fill: #3975b8;
  stroke: none;
}

/* taskbar */
.taskbar {
  display: flex;
  align-items: center;
  height: 30px;
  background: linear-gradient(to right, #20232b, #2a2e35 3%, #35383c 5%, #23262c 8%, #201f20 15%, #211f1f 30%, #1c2a32 36%, #211f1f 41%, #2d2724 52%, #2d2724 75%, #352820);
  color: #fff;
}

.taskbar button {
  display: flex;
  align-items: center;
  justify-content: center;
  height: 30px;
}

.start {
  width: 36px;
}

.start svg,
.notices svg {
  width: 16px;
  height: 16px;
}

.apps {
  display: flex;
  gap: 1px;
  margin-left: 3px;
}

.app {
  box-sizing: border-box;
  width: 36px;
}

.app.open {
  background: linear-gradient(#ffb0b0, #ffb0b0) center bottom / 28px 2px no-repeat;
}

.app.current {
  background: linear-gradient(#ffb0b0, #ffb0b0) bottom / 100% 2px no-repeat, #606468;
}

.app.alert {
  background: linear-gradient(#ff7800, #ff7800) bottom / 100% 2px no-repeat, #b46c32;
}

.tray {
  display: flex;
  gap: 8px;
  margin-left: auto;
}

.clock {
  margin-left: 12px;
  width: 45px;
  font: 12px "Open Sans", sans-serif;
  white-space: nowrap;
}

.notices {
  width: 56px;
  margin-right: 4px;
  border-right: 1px solid #8a817b;
}
</style>
